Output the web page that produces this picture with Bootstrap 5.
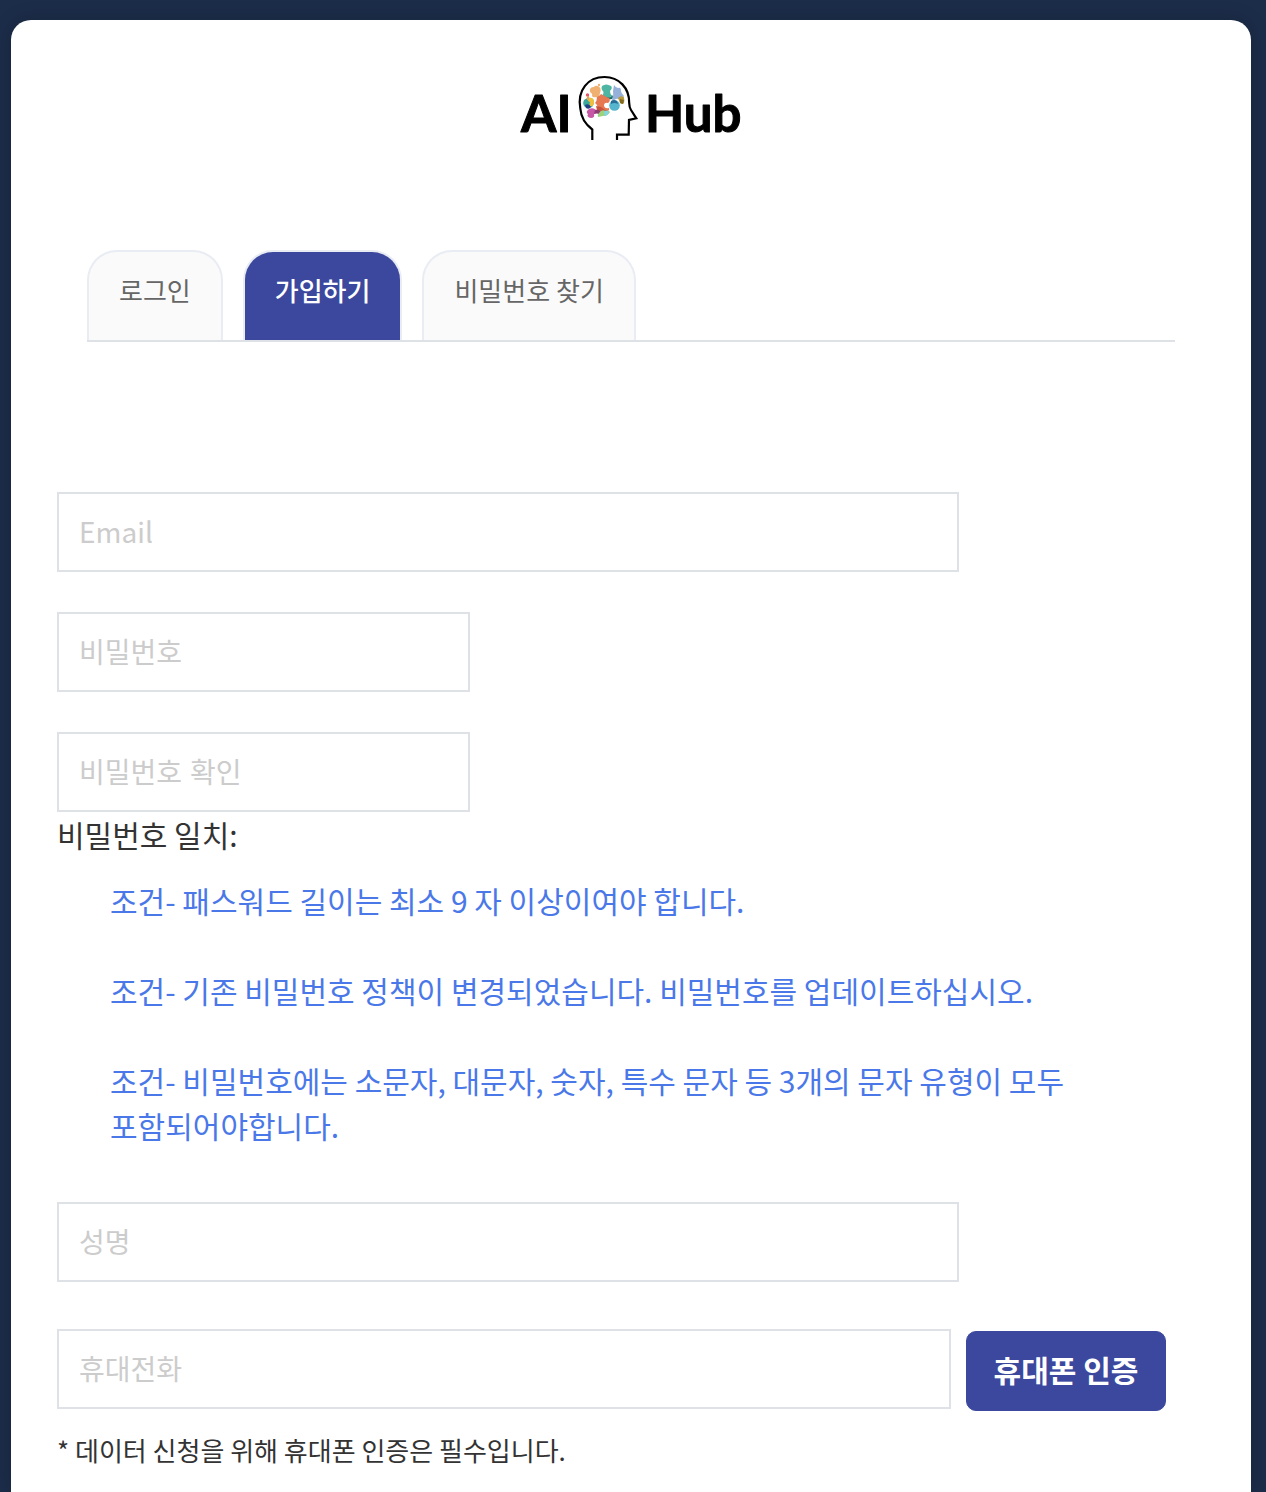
<!DOCTYPE html>
<html lang="ko">
<head>
<meta charset="utf-8">
<meta name="viewport" content="width=device-width, initial-scale=1">
<title>AI Hub - 가입하기</title>
<link href="https://cdn.jsdelivr.net/npm/bootstrap@5.3.0/dist/css/bootstrap.min.css" rel="stylesheet">
<style>
  body { background: #1c2d4a; font-family: "Noto Sans CJK JP", "Noto Sans CJK KR", sans-serif; font-feature-settings: "locl" 0; font-size: 30px; line-height: 45px; color: #333; word-break: keep-all; }
  .page-shell { padding: 20px 15px 0 11px; }
  .signup-panel { background: #fff; border-radius: 20px 20px 0 0; padding: 55px 46px 20px; box-shadow: 0 0 20px rgba(0, 0, 0, .2); }
  .site-logo { display: block; width: 222px; height: 66px; overflow: visible; }
  .logo-word { font-family: Lato, sans-serif; font-weight: 700; font-size: 51px; stroke: #000; stroke-width: 1; stroke-linejoin: round; }
  .auth-tabs { margin: 109px 30px 150px; gap: 20px; border-bottom: 2px solid #dee2e6; }
  .auth-tabs .nav-link { height: 90px; padding: 15px 30px; border: 2px solid #e9ecf3; border-bottom: 0; border-radius: 30px 30px 0 0; margin: 0; background: #fafafa; color: #666; font-size: 26px; line-height: 45px; }
  .auth-tabs .nav-link.active { background: #3b489e; color: #fff; font-weight: 500; border-color: #e9ecf3; }
  .signup-form { margin-right: 39px; }
  .signup-form .form-control { height: 80px; border: 2px solid #dee2e6; border-radius: 0; padding: 0 20px 2px; font-family: "Noto Sans CJK KR", sans-serif; font-feature-settings: normal; font-size: 28px; line-height: 74px; color: #333; }
  .signup-form .form-control::placeholder { color: #ccc; opacity: 1; }
  .signup-form .field-wide { width: 81.3%; }
  .signup-form .field-short { width: 37.2%; }
  .field-gap { margin-bottom: 40px; }
  .rules { margin: 21px 60px 54px 53px; gap: 45px; color: #4a78e8; }
  .phone-row { margin-top: 47px; gap: 15px; }
  .btn-verify { --bs-btn-color: #fff; --bs-btn-bg: #3b489e; --bs-btn-border-color: #3b489e; --bs-btn-hover-color: #fff; --bs-btn-hover-bg: #323d88; width: 200px; height: 80px; margin-top: 2px; padding: 0 0 3px; border-radius: 10px; font-size: 30px; font-weight: 700; font-feature-settings: "locl" 0; }
  .phone-note { margin-top: 16px; font-size: 26px; }
</style>
<script defer src="https://cdn.jsdelivr.net/npm/bootstrap@5.3.0/dist/js/bootstrap.bundle.min.js"></script>
</head>
<body>
<div class="page-shell min-vh-100 d-flex flex-column">
  <main class="signup-panel flex-grow-1">
    <header class="d-flex justify-content-center">
      <a href="#" aria-label="AI Hub">
        <svg class="site-logo" viewBox="0 0 222 66" role="img" aria-label="AI Hub">
          <text class="logo-word" x="1" y="57">AI</text>
          <text class="logo-word" x="125" y="57">Hub</text>
          <path d="M72.3 65V54.5C65 49 61 42 60.3 33.5C57 15 68 2 84.5 2C99 2 109.5 13 109.2 28C109.3 32 110 33.5 111 35L116.3 43.3L109 44.8L108.7 59.7H97V65" fill="none" stroke="#000" stroke-width="2.2"/>
          <path d="M70 17q-1-5 4-5q1-2 4-1q4 2 2 7q-1 2 0 4q-3 1-4 0q-3 1-4-1q1-2-2-4z" fill="#f0b071"/>
          <circle cx="79" cy="10" r="1.2" fill="#f0b071"/>
          <path d="M82 11q4-3 9 0q2 2-1 5q0 3 2 5q-4 3-10 0q3-4 0-6q-1-2 0-4z" fill="#4cb6a2"/>
          <path d="M83 21q4 2 8 1l1-2q2 2 0 4q-5 1-8-1z" fill="#1c7067"/>
          <path d="M94 10q2 3 4 3q3-1 3 3q0 2 3 5q-3 2-4 4q-2-2-4-1q-3 2-4 1q2-5 1-9z" fill="#96b1d9"/>
          <path d="M98 23q3-3 5-1q1-2 1 1q1 4-1 6q-2 0-3-1z" fill="#b79a42"/><path d="M100 24l4 1-1 4-3-1z" fill="#826b21"/>
          <circle cx="94.500" cy="30.500" r="5.300" fill="#55b6ce"/><path d="M91 26q3-2 6 0l1 3q-4-2-7 0z" fill="#286c97"/>
          <path d="M77 22q3-1 4-3q5 3 8 4q2 3-1 5q-4-1-4 3q1 3 5 2q1 3-3 3q-4 0-9-1q2-4-2-7q2-2 2-6z" fill="#e67852"/>
          <path d="M76 31l5 1 4 3 4 1q-6 3-12-1z" fill="#c6533c"/>
          <path d="M64 25q5-4 9-1q2 4-1 8q-4 2-7 0q-3-3-1-7z" fill="#38a99c"/><path d="M68 23q6-1 6 4q0 5-4 4q-1-2 0-4q-3-1-2-4z" fill="#efbf3d"/><path d="M65 30q4-2 6 2q-2 3-5 1z" fill="#253f87"/>
          <circle cx="67.500" cy="20" r="1.700" fill="#e3566b"/><path d="M67 21h2v4h-2z" fill="#efa055"/>
          <path d="M69 34q4-2 7 1q4-1 3 3l-5 1q1 4-3 4q-5-1-3-4q-3-2 1-5z" fill="#c657a5"/><path d="M75 35q4-1 6 2l-1 3q-3-3-6-1z" fill="#8e3a75"/>
          <path d="M79 38q3-4 6-2q4-1 5 1q-2 4-7 4l-5 1q-1-2 1-4z" fill="#9bd27a"/><path d="M84 36q4-1 5 1q-1 4-5 4q1-2 0-5z" fill="#83d5df"/>
        </svg>
      </a>
    </header>

    <nav class="nav nav-tabs auth-tabs" aria-label="회원 메뉴">
      <a class="nav-link" href="#">로그인</a>
      <a class="nav-link active" aria-current="page" href="#">가입하기</a>
      <a class="nav-link" href="#">비밀번호 찾기</a>
    </nav>

    <form class="signup-form">
      <label class="visually-hidden" for="email">Email</label>
      <input class="form-control field-wide field-gap" type="email" id="email" placeholder="Email">
      <label class="visually-hidden" for="password">비밀번호</label>
      <input class="form-control field-short field-gap" type="password" id="password" placeholder="비밀번호">
      <label class="visually-hidden" for="confirm">비밀번호 확인</label>
      <input class="form-control field-short" type="password" id="confirm" placeholder="비밀번호 확인">
      <div>비밀번호 일치:</div>
      <div class="rules d-flex flex-column">
        <p class="m-0">조건- 패스워드 길이는 최소 9 자 이상이여야 합니다.</p>
        <p class="m-0">조건- 기존 비밀번호 정책이 변경되었습니다. 비밀번호를 업데이트하십시오.</p>
        <p class="m-0">조건- 비밀번호에는 소문자, 대문자, 숫자, 특수 문자 등 3개의 문자 유형이 모두 포함되어야합니다.</p>
      </div>
      <label class="visually-hidden" for="fullname">성명</label>
      <input class="form-control field-wide" type="text" id="fullname" placeholder="성명">
      <div class="phone-row d-flex align-items-start">
        <label class="visually-hidden" for="phone">휴대전화</label>
        <input class="form-control" type="tel" id="phone" placeholder="휴대전화">
        <button class="btn btn-verify flex-shrink-0" type="button">휴대폰 인증</button>
      </div>
      <p class="phone-note mb-0">* 데이터 신청을 위해 휴대폰 인증은 필수입니다.</p>
    </form>
  </main>
</div>
</body>
</html>
